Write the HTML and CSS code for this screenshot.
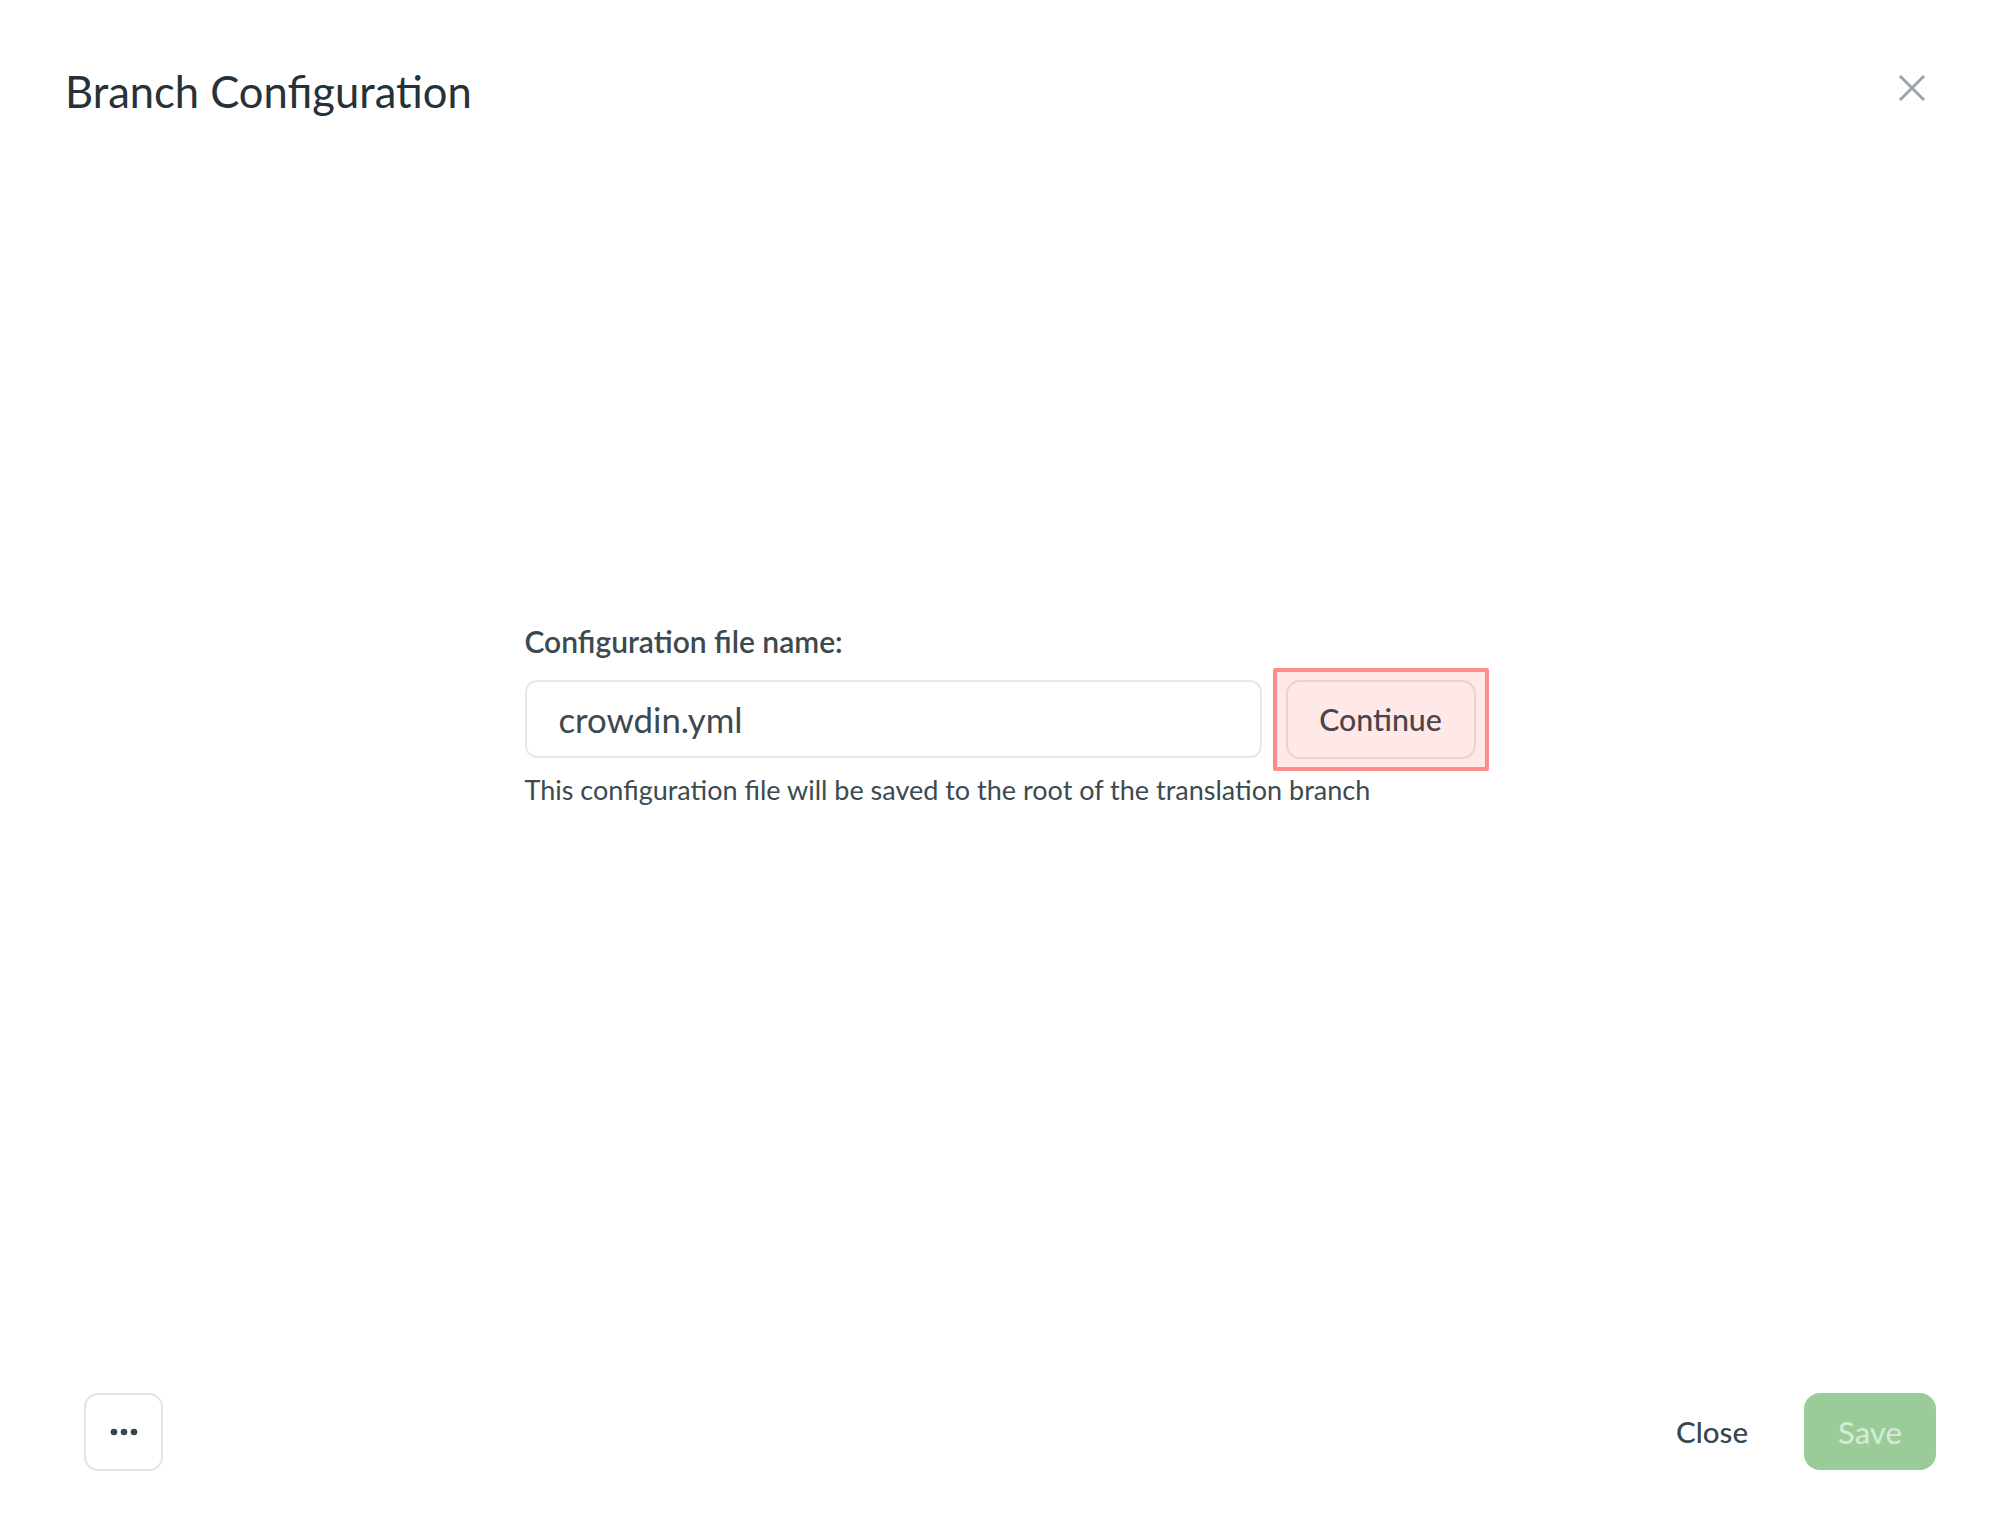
FILE: index.html
```
<!DOCTYPE html>
<html lang="en">
<head>
<meta charset="utf-8">
<title>Branch Configuration</title>
<link rel="stylesheet" href="styles.css">
</head>
<body>
<div class="modal">
  <header class="modal-header">
    <h1 class="modal-title">Branch Configuration</h1>
    <button class="icon-close" aria-label="Close">
      <svg width="28" height="28" viewBox="0 0 28 28"><path d="M2 2 L26 26 M26 2 L2 26" stroke="currentColor" stroke-width="3" fill="none"/></svg>
    </button>
  </header>
  <main class="modal-body">
    <div class="config">
      <label class="config-label" for="cfg">Configuration file name:</label>
      <div class="config-row">
        <input id="cfg" class="config-input" type="text" value="crowdin.yml">
        <div class="continue-wrap">
          <button class="btn-continue">Continue</button>
          <span class="highlight"></span>
        </div>
      </div>
      <p class="config-hint">This configuration file will be saved to the root of the translation branch</p>
    </div>
  </main>
  <footer class="modal-footer">
    <button class="btn-more" aria-label="More">
      <svg width="28" height="8" viewBox="0 0 28 8"><circle cx="4" cy="4" r="3.3" fill="currentColor"/><circle cx="14" cy="4" r="3.3" fill="currentColor"/><circle cx="24" cy="4" r="3.3" fill="currentColor"/></svg>
    </button>
    <div class="footer-actions">
      <button class="btn-close">Close</button>
      <button class="btn-save" disabled>Save</button>
    </div>
  </footer>
</div>
</body>
</html>
```
FILE: styles.css
```
* { box-sizing: border-box; }
html, body { margin: 0; padding: 0; background: #ffffff; }
body { font-family: Lato, "Noto Sans", sans-serif; color: #3c4a50; }

.modal {
  height: 100vh;
  display: flex;
  flex-direction: column;
}

.modal-header {
  display: flex;
  justify-content: space-between;
  align-items: flex-start;
  padding: 65px 74px 0 65px;
}
.modal-title {
  margin: 0;
  font-size: 43.5px;
  line-height: 1.2;
  font-weight: 400;
  color: #263238;
}
.icon-close {
  margin-top: 9px;
  padding: 0;
  border: 0;
  background: none;
  color: #9ea4a8;
  width: 28px;
  height: 28px;
  display: flex;
}

.modal-body {
  flex: 1;
  display: flex;
  align-items: center;
  justify-content: center;
}
.config { display: flex; flex-direction: column; }
.config-label {
  font-size: 30px;
  line-height: 1.2;
  font-weight: 600;
  color: #3c4a50;
  margin-bottom: 21px;
}
.config-row {
  display: flex;
  gap: 24px;
  align-items: center;
}
.config-input {
  width: 737px;
  height: 78px;
  border: 2px solid #e7e7e7;
  border-radius: 12px;
  padding: 0 32px;
  font-family: inherit;
  font-size: 34.8px;
  color: #3c4a50;
  outline: none;
}
.continue-wrap { position: relative; display: flex; }
.btn-continue {
  width: 190px;
  height: 79px;
  border: 2px solid #e7e7e7;
  border-radius: 14px;
  background: #ffffff;
  font-family: inherit;
  font-size: 30.3px;
  font-weight: 500;
  color: #3c4a50;
}
.highlight {
  position: absolute;
  left: -13px;
  right: -13px;
  top: -12px;
  bottom: -12px;
  border: 4px solid #ff8b8b;
  background: rgba(255, 0, 0, 0.09);
  border-radius: 2px;
  pointer-events: none;
}
.config-hint {
  margin: 15px 0 0;
  font-size: 27px;
  line-height: 1.2;
  color: #3c4a50;
}

.modal-footer {
  display: flex;
  justify-content: space-between;
  align-items: flex-start;
  padding: 81px 64px 67px 84px;
}
.btn-more {
  width: 79px;
  height: 78px;
  border: 2px solid #e4e4e4;
  border-radius: 14px;
  background: #ffffff;
  color: #37474f;
  display: flex;
  align-items: center;
  justify-content: center;
  padding: 0;
}
.footer-actions { display: flex; gap: 28px; }
.btn-close {
  height: 77px;
  padding: 0 28px;
  border: 0;
  background: none;
  font-family: inherit;
  font-size: 29.5px;
  font-weight: 500;
  color: #37474f;
}
.btn-save {
  width: 132px;
  height: 77px;
  border: 0;
  border-radius: 16px;
  background: #99cc99;
  font-family: inherit;
  font-size: 31px;
  font-weight: 500;
  color: rgba(255, 255, 255, 0.6);
}
```
